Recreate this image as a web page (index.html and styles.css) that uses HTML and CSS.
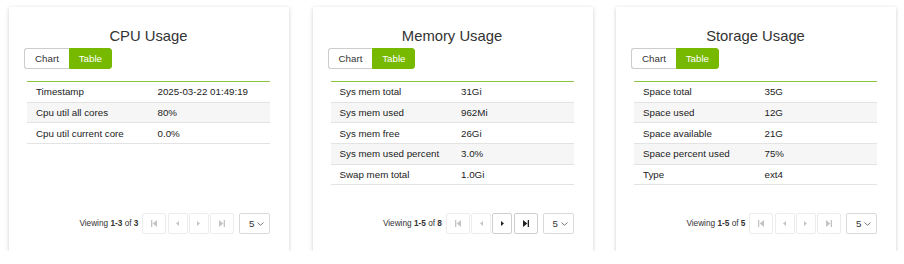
FILE: index.html
```html
<!DOCTYPE html>
<html lang="en">
<head>
  <meta charset="UTF-8">
  <title>System Usage</title>
  <link rel="stylesheet" href="styles.css">
</head>
<body>
  <div class="cards">

    <div class="card">
      <div class="card-title">CPU Usage</div>
      <div class="toggle">
        <span class="toggle-btn">Chart</span>
        <span class="toggle-btn active">Table</span>
      </div>
      <table class="stats">
        <tbody>
          <tr><td>Timestamp</td><td>2025-03-22 01:49:19</td></tr>
          <tr><td>Cpu util all cores</td><td>80%</td></tr>
          <tr><td>Cpu util current core</td><td>0.0%</td></tr>
        </tbody>
      </table>
      <div class="pager">
        <span class="viewing">Viewing <b>1-3</b> of <b>3</b></span>
        <div class="pager-btns">
          <span class="pg-btn wide"><svg width="6" height="7" viewBox="0 0 6 7"><rect x="0" y="0" width="1.3" height="7"/><path d="M6 0 L1.6 3.5 L6 7 Z"/></svg></span>
          <span class="pg-btn"><svg width="3" height="5" viewBox="0 0 3 5"><path d="M3 0 L0 2.5 L3 5 Z"/></svg></span>
          <span class="pg-btn"><svg width="3" height="5" viewBox="0 0 3 5"><path d="M0 0 L3 2.5 L0 5 Z"/></svg></span>
          <span class="pg-btn wide"><svg width="6" height="7" viewBox="0 0 6 7"><path d="M0 0 L4.4 3.5 L0 7 Z"/><rect x="4.7" y="0" width="1.3" height="7"/></svg></span>
        </div>
        <div class="page-size">5 <svg width="7" height="4" viewBox="0 0 7 4"><path d="M0.5 0.5 L3.5 3.3 L6.5 0.5" fill="none" stroke="#666" stroke-width="0.9"/></svg></div>
      </div>
    </div>

    <div class="card">
      <div class="card-title">Memory Usage</div>
      <div class="toggle">
        <span class="toggle-btn">Chart</span>
        <span class="toggle-btn active">Table</span>
      </div>
      <table class="stats">
        <tbody>
          <tr><td>Sys mem total</td><td>31Gi</td></tr>
          <tr><td>Sys mem used</td><td>962Mi</td></tr>
          <tr><td>Sys mem free</td><td>26Gi</td></tr>
          <tr><td>Sys mem used percent</td><td>3.0%</td></tr>
          <tr><td>Swap mem total</td><td>1.0Gi</td></tr>
        </tbody>
      </table>
      <div class="pager">
        <span class="viewing">Viewing <b>1-5</b> of <b>8</b></span>
        <div class="pager-btns">
          <span class="pg-btn wide"><svg width="6" height="7" viewBox="0 0 6 7"><rect x="0" y="0" width="1.3" height="7"/><path d="M6 0 L1.6 3.5 L6 7 Z"/></svg></span>
          <span class="pg-btn"><svg width="3" height="5" viewBox="0 0 3 5"><path d="M3 0 L0 2.5 L3 5 Z"/></svg></span>
          <span class="pg-btn enabled"><svg width="3" height="5" viewBox="0 0 3 5"><path d="M0 0 L3 2.5 L0 5 Z"/></svg></span>
          <span class="pg-btn wide enabled"><svg width="6" height="7" viewBox="0 0 6 7"><path d="M0 0 L4.4 3.5 L0 7 Z"/><rect x="4.7" y="0" width="1.3" height="7"/></svg></span>
        </div>
        <div class="page-size">5 <svg width="7" height="4" viewBox="0 0 7 4"><path d="M0.5 0.5 L3.5 3.3 L6.5 0.5" fill="none" stroke="#666" stroke-width="0.9"/></svg></div>
      </div>
    </div>

    <div class="card">
      <div class="card-title">Storage Usage</div>
      <div class="toggle">
        <span class="toggle-btn">Chart</span>
        <span class="toggle-btn active">Table</span>
      </div>
      <table class="stats">
        <tbody>
          <tr><td>Space total</td><td>35G</td></tr>
          <tr><td>Space used</td><td>12G</td></tr>
          <tr><td>Space available</td><td>21G</td></tr>
          <tr><td>Space percent used</td><td>75%</td></tr>
          <tr><td>Type</td><td>ext4</td></tr>
        </tbody>
      </table>
      <div class="pager">
        <span class="viewing">Viewing <b>1-5</b> of <b>5</b></span>
        <div class="pager-btns">
          <span class="pg-btn wide"><svg width="6" height="7" viewBox="0 0 6 7"><rect x="0" y="0" width="1.3" height="7"/><path d="M6 0 L1.6 3.5 L6 7 Z"/></svg></span>
          <span class="pg-btn"><svg width="3" height="5" viewBox="0 0 3 5"><path d="M3 0 L0 2.5 L3 5 Z"/></svg></span>
          <span class="pg-btn"><svg width="3" height="5" viewBox="0 0 3 5"><path d="M0 0 L3 2.5 L0 5 Z"/></svg></span>
          <span class="pg-btn wide"><svg width="6" height="7" viewBox="0 0 6 7"><path d="M0 0 L4.4 3.5 L0 7 Z"/><rect x="4.7" y="0" width="1.3" height="7"/></svg></span>
        </div>
        <div class="page-size">5 <svg width="7" height="4" viewBox="0 0 7 4"><path d="M0.5 0.5 L3.5 3.3 L6.5 0.5" fill="none" stroke="#666" stroke-width="0.9"/></svg></div>
      </div>
    </div>

  </div>
</body>
</html>
```

FILE: styles.css
```css
body {
  margin: 0;
  background: #fff;
  color: #222;
  font-family: "Liberation Sans", Arial, sans-serif;
}

.cards {
  display: grid;
  grid-template-columns: repeat(3, 280px);
  column-gap: 23.5px;
  padding: 7px 0 0 9px;
}

.card {
  box-sizing: border-box;
  height: 244px;
  padding: 21px 19px 17px 18px;
  display: flex;
  flex-direction: column;
  background: #fff;
  box-shadow: 0 1px 4px rgba(0, 0, 0, 0.2);
}

.card-title {
  text-align: center;
  font-size: 14.8px;
  line-height: 17px;
  color: #333;
}

.toggle {
  display: flex;
  margin: 3px 0 0 -3px;
}

.toggle-btn {
  box-sizing: border-box;
  height: 21px;
  padding: 0 10px;
  font-size: 9.75px;
  line-height: 19px;
  border: 1px solid #ccc;
  color: #333;
  background: #fff;
}

.toggle-btn:first-child {
  border-radius: 3px 0 0 3px;
  border-right: none;
}

.toggle-btn.active {
  width: 43px;
  text-align: center;
  padding: 0;
  background: #76b900;
  border-color: #76b900;
  color: #fff;
  border-radius: 0 3px 3px 0;
}

.stats {
  width: 100%;
  margin-top: 12px;
  border-collapse: collapse;
  table-layout: fixed;
  border-top: 1px solid #8cc63f;
  font-size: 9.75px;
}

.stats td {
  padding: 4.35px 9px;
  line-height: 11px;
  border-bottom: 1px solid #e3e3e3;
  white-space: nowrap;
}

.stats tr:nth-child(even) td {
  background: #f6f6f6;
}

.pager {
  margin-top: auto;
  display: flex;
  justify-content: flex-end;
  align-items: center;
  height: 21px;
  font-size: 8.25px;
  color: #333;
}

.viewing {
  margin-right: 4px;
}

.pager-btns {
  display: flex;
  gap: 1.2px;
}

.pg-btn {
  box-sizing: border-box;
  width: 20px;
  height: 21px;
  display: flex;
  align-items: center;
  justify-content: center;
  border: 1px solid #ececec;
  border-radius: 2px;
  fill: #c4c4c4;
}

.pg-btn.wide {
  width: 24px;
}

.pg-btn.enabled {
  border-color: #cfcfcf;
  fill: #222;
}

.page-size {
  box-sizing: border-box;
  width: 31px;
  height: 21px;
  margin-left: 5px;
  display: flex;
  align-items: center;
  justify-content: space-between;
  padding: 0 5px 0 9px;
  border: 1px solid #dadada;
  border-radius: 2px;
  font-size: 9.75px;
  color: #333;
}
```
